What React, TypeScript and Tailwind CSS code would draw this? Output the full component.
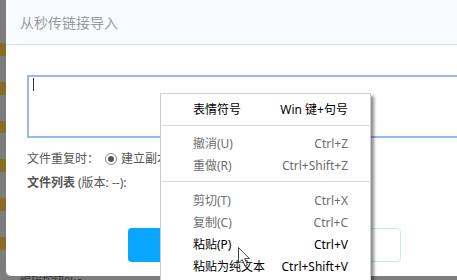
import React from "react";

const font = { fontFamily: '"Noto Sans", "Noto Sans CJK SC", sans-serif' };

function MenuItem({ label, shortcut, disabled }: { label: string; shortcut: string; disabled?: boolean }) {
  return (
    <div
      className={`flex h-[22px] items-center justify-between pl-[32px] pr-[22px] text-[12px] ${
        disabled ? "text-[#6d6d6d]" : "text-black"
      }`}
    >
      <span>{label}</span>
      <span>{shortcut}</span>
    </div>
  );
}

export default function App() {
  return (
    <div className="relative h-[280px] w-[457px] overflow-hidden bg-[#7d7d7d]" style={font}>
      <div className="flex h-[276px]">
        {/* backdrop strip */}
        <div className="flex w-[6px] flex-col pt-[43px]">
          {[0, 1, 2, 3, 4, 5].map((i) => (
            <div key={i} className="mb-[26px] h-[19px] rounded-r-[2px] bg-[#8a6d24]" />
          ))}
        </div>
        {/* dialog */}
        <div className="flex flex-1 flex-col overflow-hidden rounded-bl-[5px] bg-white">
          <div className="flex h-[45px] items-center border-b border-[#d3e3ec] bg-[#f8fbff] pl-[14px] text-[14px] text-[#9a9a9a]">
            从秒传链接导入
          </div>
          <div className="flex flex-col pl-[21px] pt-[30px]">
            <div className="relative h-[63px] w-[460px] border-2 border-[#93baf7]">
              <div className="absolute left-[4px] top-[1px] h-[13px] w-px bg-[#333]" />
            </div>
            <div className="mt-[11px] flex h-[20px] items-center text-[12px] text-[#555]">
              <span>文件重复时：</span>
              <span className="ml-[6px] flex h-[12px] w-[12px] items-center justify-center rounded-full border border-[#8a8a8a] bg-white">
                <span className="h-[6px] w-[6px] rounded-full bg-[#555]" />
              </span>
              <span className="ml-[4px]">建立副本</span>
            </div>
            <div className="mt-[4px] flex h-[20px] items-center text-[12px] text-[#555]">
              <span className="font-bold">文件列表</span>
              <span className="ml-[3px]">(版本: --):</span>
            </div>
            <div className="mt-[35px] flex gap-[13px] pl-[101px]">
              <div className="h-[34px] w-[130px] rounded-[4px] bg-[#08a6ff]" />
              <div className="h-[34px] w-[130px] rounded-[4px] border border-[#c5e6fb] bg-white" />
            </div>
          </div>
        </div>
      </div>
      <div className="h-[4px] overflow-hidden pl-[20px] text-[11px] leading-[10px] text-[#333]">编辑按钮0ko</div>

      {/* context menu */}
      <div className="absolute left-[160px] top-[93px] w-[211px] border border-[#cccccc] bg-white pb-[6px] pt-[5px] shadow-[3px_3px_3px_rgba(0,0,0,0.45)]">
        <MenuItem label="表情符号" shortcut="Win 键+句号" />
        <div className="mx-[1px] mb-[7px] mt-[4px] h-px bg-[#d7d7d7]" />
        <MenuItem label="撤消(U)" shortcut="Ctrl+Z" disabled />
        <MenuItem label="重做(R)" shortcut="Ctrl+Shift+Z" disabled />
        <div className="mx-[1px] mb-[8px] mt-[4px] h-px bg-[#d7d7d7]" />
        <MenuItem label="剪切(T)" shortcut="Ctrl+X" disabled />
        <MenuItem label="复制(C)" shortcut="Ctrl+C" disabled />
        <MenuItem label="粘贴(P)" shortcut="Ctrl+V" />
        <MenuItem label="粘贴为纯文本" shortcut="Ctrl+Shift+V" />
      </div>

      {/* mouse cursor */}
      <svg className="absolute left-[238px] top-[247px]" width="14" height="21" viewBox="0 0 14 21">
        <path d="M0.5 0.5 L0.5 16 L4.2 12.5 L7 19 L9.4 18 L6.7 11.6 L11.5 11.6 Z" fill="#fff" stroke="#444" strokeWidth="1" strokeLinejoin="round" />
      </svg>
    </div>
  );
}
